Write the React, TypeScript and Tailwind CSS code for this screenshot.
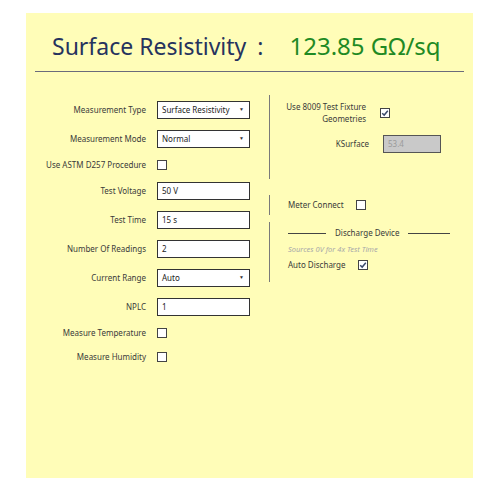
import React from 'react';

const font = { fontFamily: '"Noto Sans", "Open Sans", sans-serif' };

const Check = ({ checked }: { checked?: boolean }) => (
  <div className="w-[10px] h-[10px] border border-[#444] bg-white flex items-center justify-center">
    {checked && (
      <svg viewBox="0 0 10 10" className="w-[8px] h-[8px]">
        <path d="M1.5 5.2 L4 7.6 L8.5 2.2" fill="none" stroke="#3b4a6b" strokeWidth="1.8" />
      </svg>
    )}
  </div>
);

const Field = ({ value, select }: { value: string; select?: boolean }) => (
  <div className="w-[93px] h-[18px] border border-[#333] bg-white flex items-center justify-between pl-[4px] pr-[5px] text-[8px] text-[#222]">
    <span className="whitespace-nowrap">{value}</span>
    {select && <span className="text-[5px] text-[#333]">▼</span>}
  </div>
);

type Row = { label: string; h: string; kind: 'field' | 'select' | 'check'; value?: string };

const rows: Row[] = [
  { label: 'Measurement Type', h: 'h-[29px]', kind: 'select', value: 'Surface Resistivity' },
  { label: 'Measurement Mode', h: 'h-[29px]', kind: 'select', value: 'Normal' },
  { label: 'Use ASTM D257 Procedure', h: 'h-[23px]', kind: 'check' },
  { label: 'Test Voltage', h: 'h-[29px]', kind: 'field', value: '50 V' },
  { label: 'Test Time', h: 'h-[29px]', kind: 'field', value: '15 s' },
  { label: 'Number Of Readings', h: 'h-[29px]', kind: 'field', value: '2' },
  { label: 'Current Range', h: 'h-[29px]', kind: 'select', value: 'Auto' },
  { label: 'NPLC', h: 'h-[29px]', kind: 'field', value: '1' },
  { label: 'Measure Temperature', h: 'h-[23px]', kind: 'check' },
  { label: 'Measure Humidity', h: 'h-[26px]', kind: 'check' },
];

export default function App() {
  return (
    <div className="w-[500px] h-[490px] bg-white pt-[13px] pl-[26px]" style={font}>
      <div className="w-[447px] h-[465px] bg-[#fffdb8] flex flex-col">
        <div className="h-[58px] pl-[26px] pt-[8px] flex items-center text-[23px] leading-none">
          <span className="text-[#26335e]">Surface Resistivity</span>
          <span className="text-[#26335e] ml-[11px]">:</span>
          <span className="text-[#1f8a24] ml-[26px] text-[24px]">123.85 GΩ/sq</span>
        </div>
        <div className="mx-[9px] border-t border-[#6b6b7b]" />
        <div className="flex pt-[23px]">
          <div className="w-[243px] flex flex-col">
            {rows.map((r) => (
              <div key={r.label} className={`${r.h} flex items-center`}>
                <div className="w-[120px] text-right text-[8px] text-[#3a3a3a] whitespace-nowrap">{r.label}</div>
                <div className="ml-[11px]">
                  {r.kind === 'check' ? (
                    <Check />
                  ) : (
                    <Field value={r.value ?? ''} select={r.kind === 'select'} />
                  )}
                </div>
              </div>
            ))}
          </div>
          <div className="flex flex-col text-[8px] text-[#3a3a3a]">
            <div className="h-[84px] border-l border-[#7a7a7a] pt-[6px]">
              <div className="flex items-center">
                <div className="w-[96px] text-right leading-[12px]">
                  Use 8009 Test Fixture
                  <br />
                  Geometries
                </div>
                <div className="ml-[14px]">
                  <Check checked />
                </div>
              </div>
              <div className="flex items-center mt-[10px]">
                <div className="w-[99px] text-right">KSurface</div>
                <div className="ml-[14px] w-[58px] h-[18px] border border-[#555] bg-[#c9c9c9] flex items-center pl-[4px] text-[#9a9a9a]">
                  53.4
                </div>
              </div>
            </div>
            <div className="mt-[16px] h-[20px] border-l border-[#7a7a7a] flex items-center pl-[18px]">
              <span>Meter Connect</span>
              <div className="ml-[12px]">
                <Check />
              </div>
            </div>
            <div className="mt-[7px] h-[60px] border-l border-[#7a7a7a] pl-[18px] pt-[5px]">
              <div className="flex items-center w-[162px]">
                <div className="w-[38px] border-t border-[#444]" />
                <span className="mx-[9px]">Discharge Device</span>
                <div className="flex-1 border-t border-[#444]" />
              </div>
              <div className="mt-[5px] italic text-[7.5px] text-[#a9a9a9]">Sources 0V for 4x Test Time</div>
              <div className="flex items-center mt-[4px]">
                <span>Auto Discharge</span>
                <div className="ml-[12px]">
                  <Check checked />
                </div>
              </div>
            </div>
          </div>
        </div>
      </div>
    </div>
  );
}
